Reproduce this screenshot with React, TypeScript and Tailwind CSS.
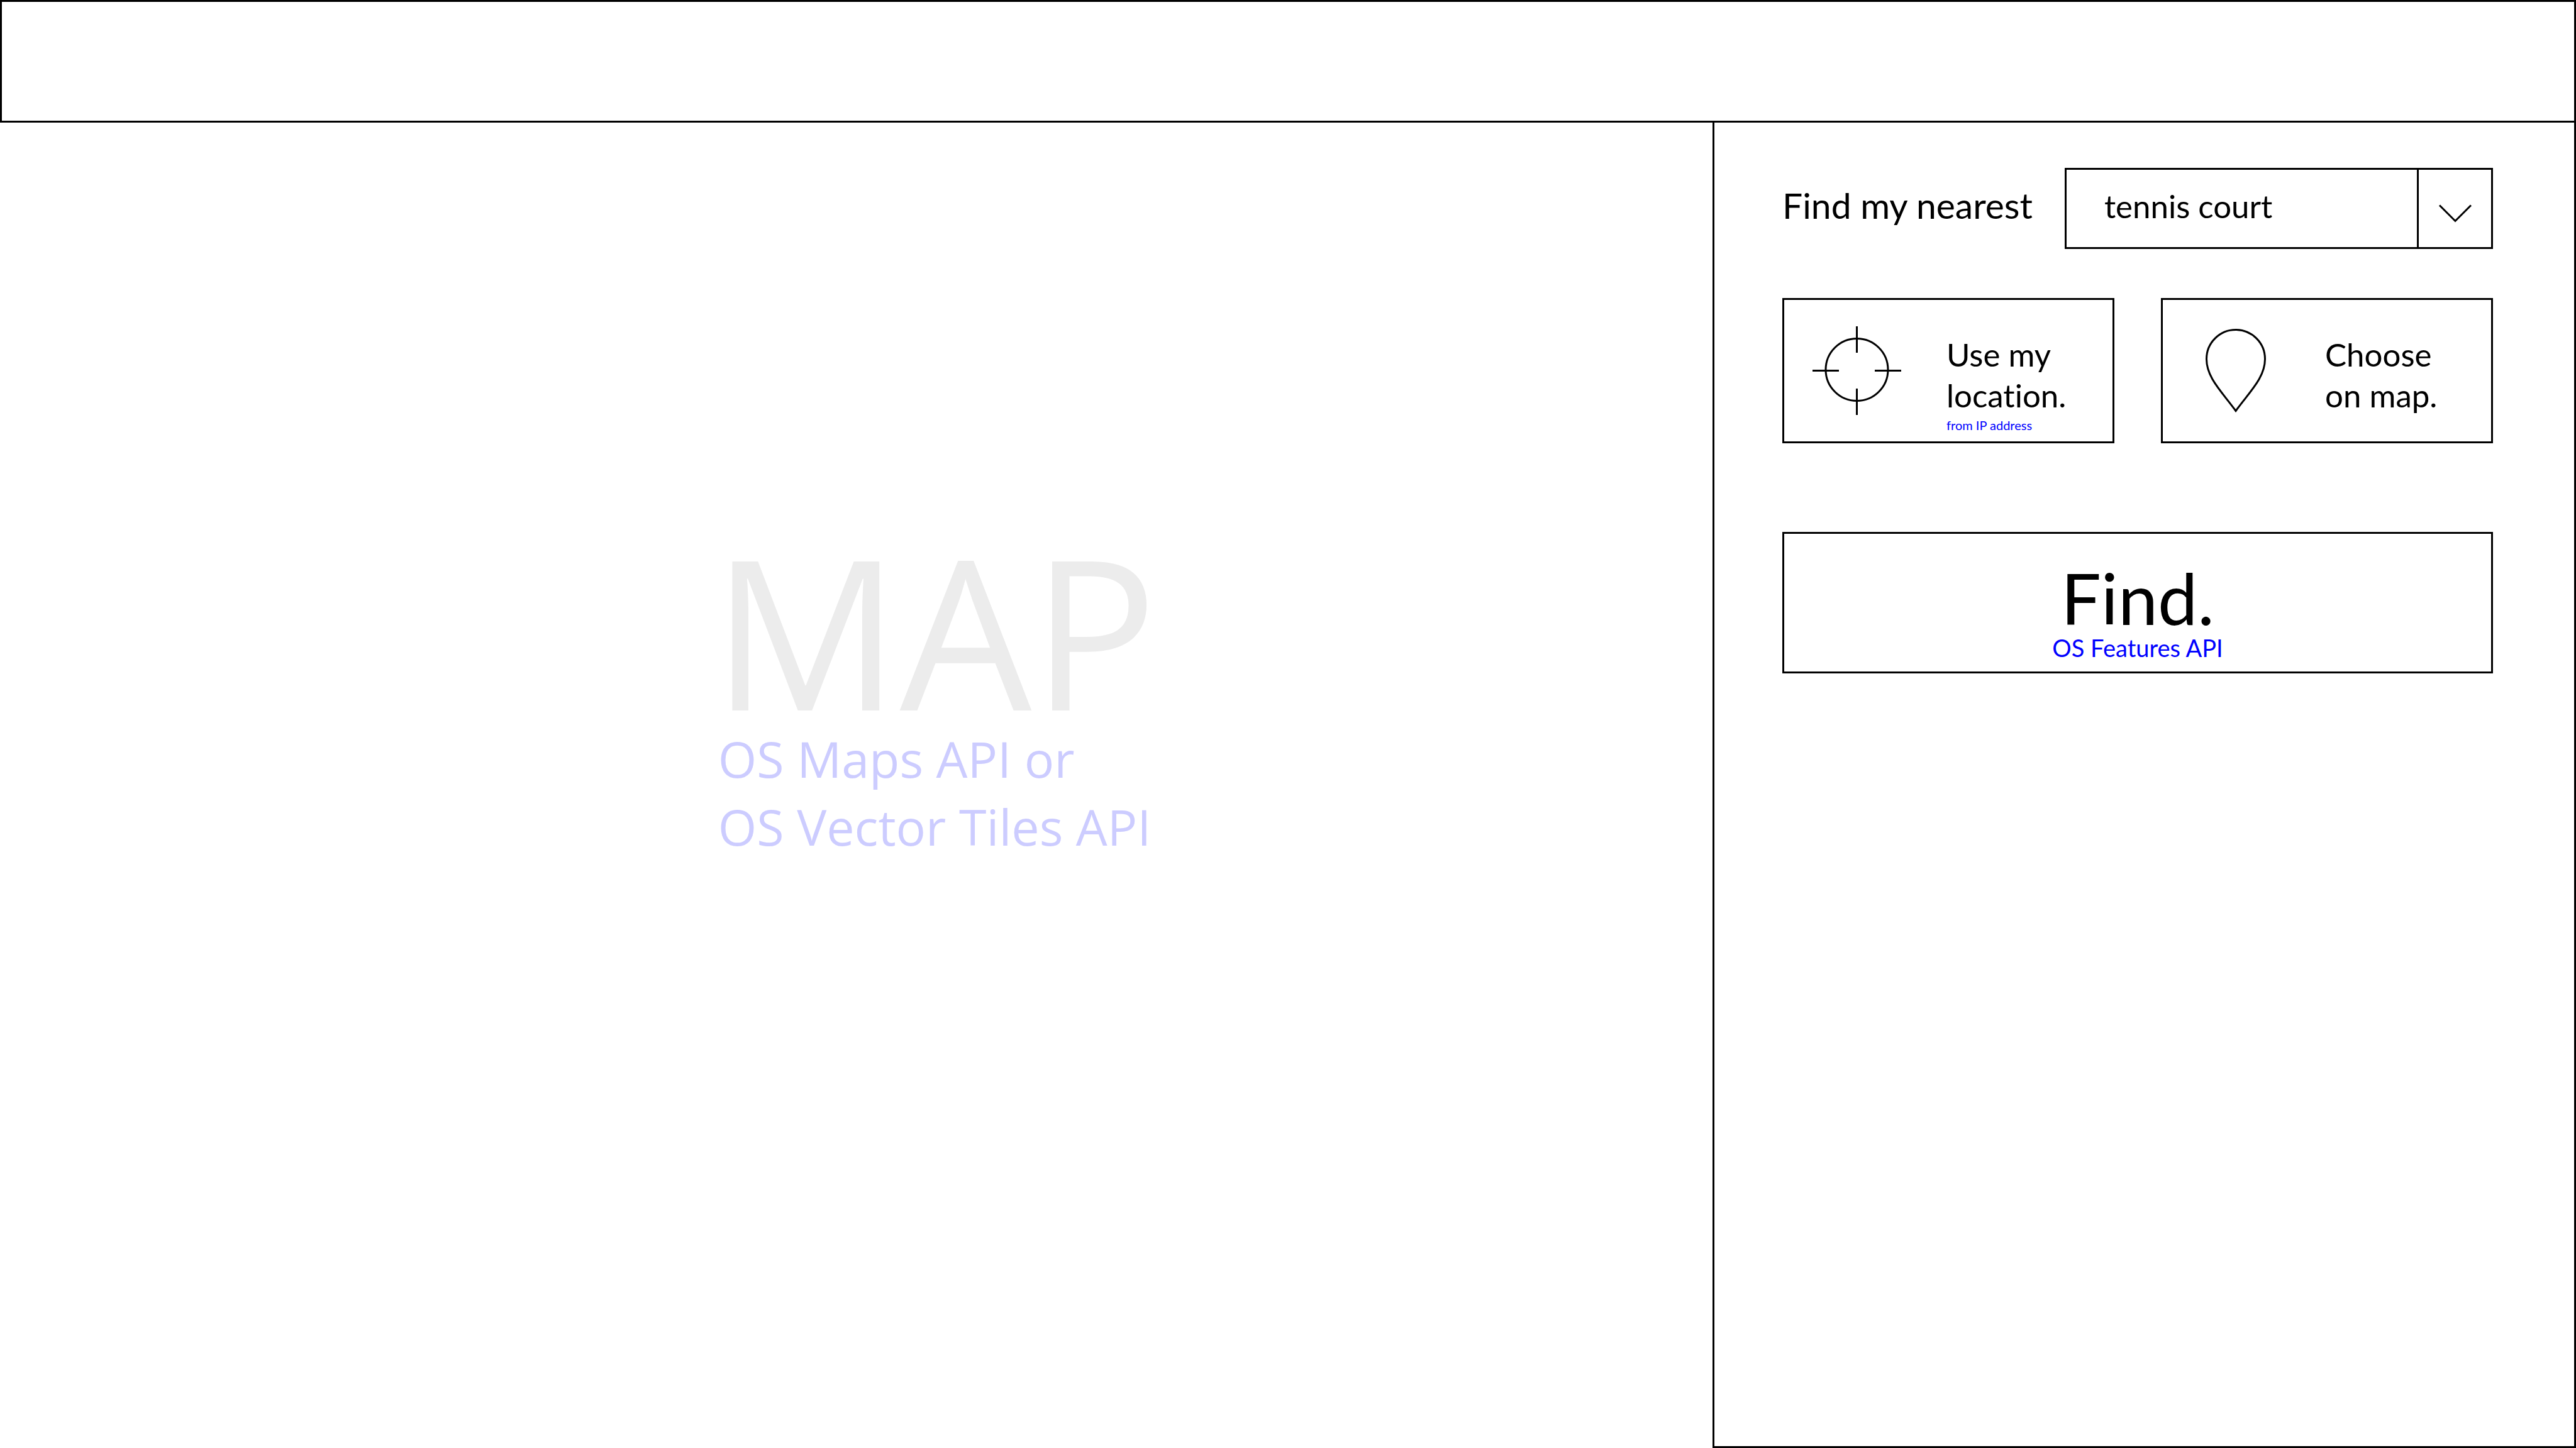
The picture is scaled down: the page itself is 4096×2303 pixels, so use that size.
import type { ReactNode } from 'react';

function Crosshair() {
  return (
    <svg viewBox="0 0 141 141" className="w-[141px] h-[141px]" fill="none" stroke="currentColor" strokeWidth="3" aria-hidden="true">
      <circle cx="70.5" cy="69" r="49.5" />
      <path d="M70.5 0V42M70.5 99V141M0 70.5H42M99 70.5H141" />
    </svg>
  );
}

function Pin() {
  return (
    <svg viewBox="0 0 96 133" className="w-[96px] h-[133px]" fill="none" stroke="currentColor" strokeWidth="3" aria-hidden="true">
      <path d="M48 130.5C26 100 1.5 78 1.5 48A46.5 46.5 0 0 1 94.5 48C94.5 78 70 100 48 130.5Z" />
    </svg>
  );
}

function Chevron() {
  return (
    <svg viewBox="0 0 70 29" className="w-[70px] h-[29px]" fill="none" stroke="currentColor" strokeWidth="3" aria-hidden="true">
      <path d="M10 1.5L35 26.5L60 1.5" />
    </svg>
  );
}

function LocationButton({ icon, children }: { icon: ReactNode; children: ReactNode }) {
  return (
    <button type="button" className="flex min-h-[231px] border-3 border-black pl-[45px] text-left">
      <span className="flex w-[141px] shrink-0 items-center justify-center self-center">{icon}</span>
      <span className="ml-[72px] mt-[54px] flex flex-col text-[51px] leading-[65px]">{children}</span>
    </button>
  );
}

export default function App() {
  return (
    <div className="flex min-h-screen flex-col bg-white text-black">
      <header className="h-[195px] shrink-0 border-3 border-black" />
      <div className="flex flex-1">
        <main className="flex-1 pl-[1132px] pt-[654px] font-['Open_Sans',sans-serif]">
          <div className="flex w-fit flex-col items-center">
            <h1 className="text-[332px] leading-[304px] text-[#ececec]">MAP</h1>
            <p className="text-[79px] leading-[108px] text-[#ccccff]">
              OS Maps API or
              <br />
              OS Vector Tiles API
            </p>
          </div>
        </main>
        <aside className="w-[33.52%] shrink-0 border-x-3 border-b-3 border-black pl-[108px] pr-[129px] pt-[72px] font-['Lato',sans-serif] [font-variant-ligatures:none]">
          <form onSubmit={(e) => e.preventDefault()}>
            <div className="flex items-center gap-[51px]">
              <label htmlFor="facility" className="pb-3 text-[57px] leading-[72px] whitespace-nowrap">
                Find my nearest
              </label>
              <div className="relative h-[129px] flex-1 border-3 border-black">
                <select id="facility" className="h-full w-full appearance-none bg-white pb-1.5 pl-[60px] text-[51px]">
                  <option>tennis court</option>
                </select>
                <span className="pointer-events-none absolute inset-y-0 right-0 flex w-[118px] items-center justify-center border-l-3 border-black pt-4">
                  <Chevron />
                </span>
              </div>
            </div>
            <div className="mt-[78px] grid grid-cols-2 gap-[74px]">
              <LocationButton icon={<Crosshair />}>
                <span>Use my</span>
                <span>location.</span>
                <span className="text-[20px] leading-[30px] text-[#0000ff]">from IP address</span>
              </LocationButton>
              <LocationButton icon={<Pin />}>
                <span>Choose</span>
                <span>on map.</span>
              </LocationButton>
            </div>
            <button type="submit" className="mt-[141px] flex min-h-[225px] w-full flex-col items-center border-3 border-black pt-[44px]">
              <span className="text-[113px] leading-[114px]">Find.</span>
              <span className="text-[38px] leading-[46px] text-[#0000ff]">OS Features API</span>
            </button>
          </form>
        </aside>
      </div>
    </div>
  );
}
